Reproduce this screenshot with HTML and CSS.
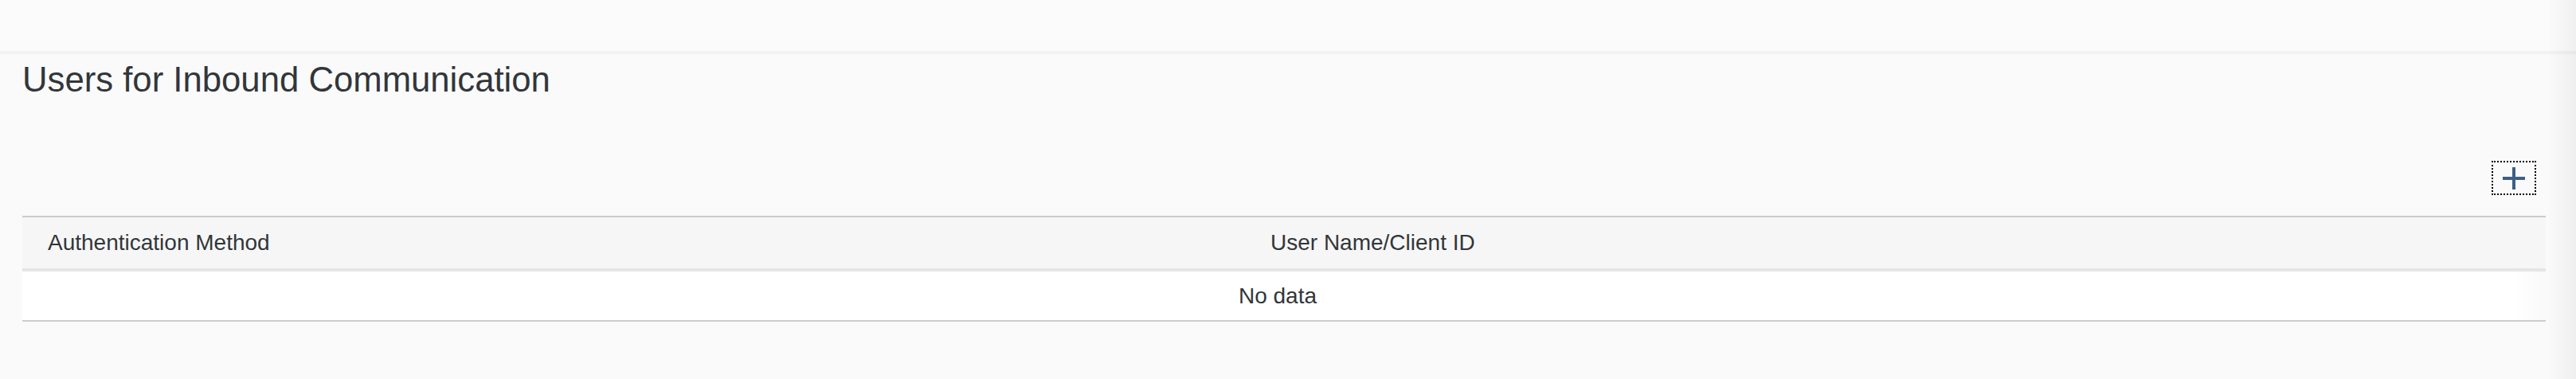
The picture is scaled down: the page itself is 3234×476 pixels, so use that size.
FILE: index.html
```html
<!DOCTYPE html>
<html lang="en">
<head>
<meta charset="utf-8">
<title>Users for Inbound Communication</title>
<link rel="stylesheet" href="styles.css">
</head>
<body>
  <div class="topbar"></div>
  <section class="section">
    <h2 class="title">Users for Inbound Communication</h2>
    <div class="toolbar">
      <button class="add-btn" type="button" aria-label="Add">
        <svg width="28" height="28" viewBox="0 0 28 28" aria-hidden="true">
          <path d="M14 0V28M0 14H28" stroke="#3d6085" stroke-width="4" fill="none"/>
        </svg>
      </button>
    </div>
    <div class="table">
      <div class="row head">
        <div class="cell">Authentication Method</div>
        <div class="cell">User Name/Client ID</div>
      </div>
      <div class="row nodata">
        <div class="empty">No data</div>
      </div>
    </div>
  </section>
  <div class="edge-shade"></div>
</body>
</html>
```

FILE: styles.css
```css
html, body {
  margin: 0;
  padding: 0;
}
body {
  background: #fafafa;
  font-family: "Liberation Sans", Arial, sans-serif;
  color: #32363a;
  height: 476px;
  overflow: hidden;
}
.topbar {
  height: 64px;
  background: #fbfbfb;
  border-bottom: 4px solid #f2f2f2;
}
.section {
  padding: 0 38px 0 28px;
}
.title {
  margin: 6px 0 0 0;
  font-size: 43.7px;
  line-height: 52px;
  font-weight: normal;
  color: #32363a;
}
.toolbar {
  display: flex;
  justify-content: flex-end;
  margin-top: 76px;
  margin-bottom: 26px;
}
.add-btn {
  width: 56px;
  height: 43px;
  margin-right: 12px;
  padding: 0;
  background: transparent;
  border: 2px dotted #000;
  display: flex;
  align-items: center;
  justify-content: center;
}
.add-btn svg {
  display: block;
}
.table {
  border-top: 2px solid #cccccc;
  border-bottom: 2px solid #cccccc;
}
.row {
  display: grid;
  grid-template-columns: 1535px 1fr;
}
.head {
  height: 64px;
  background: #f6f6f6;
  border-bottom: 4px solid #e5e5e5;
  font-size: 28px;
  line-height: 64px;
}
.cell {
  padding: 0 32px;
  white-space: nowrap;
}
.nodata {
  display: flex;
  justify-content: center;
  height: 61px;
  padding-right: 16px;
  background: linear-gradient(to right, #ffffff calc(100% - 40px), #f9f9f9);
  font-size: 28px;
  line-height: 61px;
}
.edge-shade {
  position: fixed;
  top: 0;
  right: 0;
  bottom: 0;
  width: 36px;
  background: linear-gradient(to right, rgba(0,0,0,0), rgba(0,0,0,0.045));
  pointer-events: none;
}
```
